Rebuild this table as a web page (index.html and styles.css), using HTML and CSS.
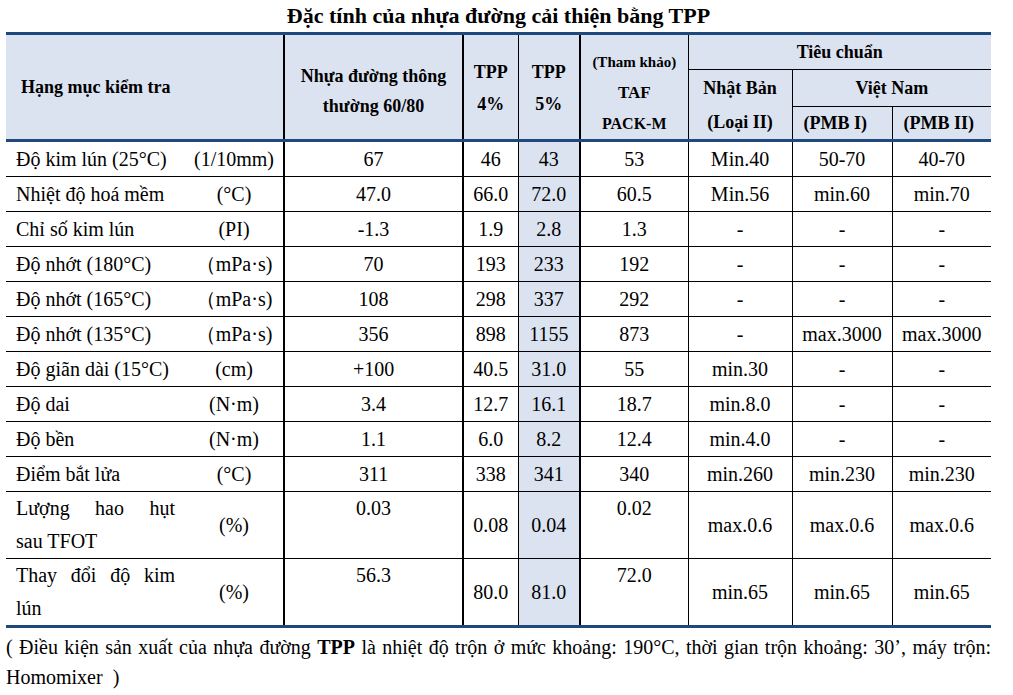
FILE: index.html
```html
<!DOCTYPE html>
<html lang="vi">
<head>
<meta charset="utf-8">
<title>Đặc tính của nhựa đường cải thiện bằng TPP</title>
<link rel="stylesheet" href="styles.css">
</head>
<body>
<div class="sheet">
  <h1 class="title">Đặc tính của nhựa đường cải thiện bằng TPP</h1>
  <table class="spec">
    <colgroup>
      <col class="c-item"><col class="c-unit"><col class="c-base"><col class="c-tpp4"><col class="c-tpp5"><col class="c-taf"><col class="c-jp"><col class="c-vn1"><col class="c-vn2">
    </colgroup>
    <thead>
      <tr class="hr1">
        <th colspan="2" rowspan="3" class="h-item bR2">Hạng mục kiểm tra</th>
        <th rowspan="3" class="bR2 h-base">Nhựa đường thông<br>thường 60/80</th>
        <th rowspan="3" class="bR1 h-tpp">TPP<br>4%</th>
        <th rowspan="3" class="bR2 h-tpp">TPP<br>5%</th>
        <th rowspan="3" class="bR1 h-taf"><span class="t-small">(Tham khảo)</span><span class="t-taf">TAF</span><span class="t-pack">PACK-M</span></th>
        <th colspan="3" class="bB">Tiêu chuẩn</th>
      </tr>
      <tr class="hr2">
        <th rowspan="2" class="bR1 h-jp"><span class="jp1">Nhật Bản</span><span class="jp2">(Loại II)</span></th>
        <th colspan="2" class="bB">Việt Nam</th>
      </tr>
      <tr class="hr3">
        <th class="bR1 h-left">(PMB I)</th>
        <th class="h-left">(PMB II)</th>
      </tr>
    </thead>
    <tbody>
      <tr>
        <td class="item">Độ kim lún (25°C)</td><td class="unit">(1/10mm)</td>
        <td class="bR2">67</td><td class="bR1">46</td><td class="hl bR2">43</td><td class="bR1">53</td><td class="bR1">Min.40</td><td class="bR1">50-70</td><td>40-70</td>
      </tr>
      <tr>
        <td class="item">Nhiệt độ hoá mềm</td><td class="unit">(°C)</td>
        <td class="bR2">47.0</td><td class="bR1">66.0</td><td class="hl bR2">72.0</td><td class="bR1">60.5</td><td class="bR1">Min.56</td><td class="bR1">min.60</td><td>min.70</td>
      </tr>
      <tr>
        <td class="item">Chỉ số kim lún</td><td class="unit">(PI)</td>
        <td class="bR2">-1.3</td><td class="bR1">1.9</td><td class="hl bR2">2.8</td><td class="bR1">1.3</td><td class="bR1">-</td><td class="bR1">-</td><td>-</td>
      </tr>
      <tr>
        <td class="item">Độ nhớt (180°C)</td><td class="unit">（mPa·s)</td>
        <td class="bR2">70</td><td class="bR1">193</td><td class="hl bR2">233</td><td class="bR1">192</td><td class="bR1">-</td><td class="bR1">-</td><td>-</td>
      </tr>
      <tr>
        <td class="item">Độ nhớt (165°C)</td><td class="unit">（mPa·s)</td>
        <td class="bR2">108</td><td class="bR1">298</td><td class="hl bR2">337</td><td class="bR1">292</td><td class="bR1">-</td><td class="bR1">-</td><td>-</td>
      </tr>
      <tr>
        <td class="item">Độ nhớt (135°C)</td><td class="unit">（mPa·s)</td>
        <td class="bR2">356</td><td class="bR1">898</td><td class="hl bR2">1155</td><td class="bR1">873</td><td class="bR1">-</td><td class="bR1">max.3000</td><td>max.3000</td>
      </tr>
      <tr>
        <td class="item">Độ giãn dài (15°C)</td><td class="unit">(cm)</td>
        <td class="bR2">+100</td><td class="bR1">40.5</td><td class="hl bR2">31.0</td><td class="bR1">55</td><td class="bR1">min.30</td><td class="bR1">-</td><td>-</td>
      </tr>
      <tr>
        <td class="item">Độ dai</td><td class="unit">(N·m)</td>
        <td class="bR2">3.4</td><td class="bR1">12.7</td><td class="hl bR2">16.1</td><td class="bR1">18.7</td><td class="bR1">min.8.0</td><td class="bR1">-</td><td>-</td>
      </tr>
      <tr>
        <td class="item">Độ bền</td><td class="unit">(N·m)</td>
        <td class="bR2">1.1</td><td class="bR1">6.0</td><td class="hl bR2">8.2</td><td class="bR1">12.4</td><td class="bR1">min.4.0</td><td class="bR1">-</td><td>-</td>
      </tr>
      <tr>
        <td class="item">Điểm bắt lửa</td><td class="unit">(°C)</td>
        <td class="bR2">311</td><td class="bR1">338</td><td class="hl bR2">341</td><td class="bR1">340</td><td class="bR1">min.260</td><td class="bR1">min.230</td><td>min.230</td>
      </tr>
      <tr class="dbl">
        <td class="item"><span class="jl">Lượng hao hụt</span><span class="ln">sau TFOT</span></td><td class="unit">(%)</td>
        <td class="bR2 top">0.03</td><td class="bR1">0.08</td><td class="hl bR2">0.04</td><td class="bR1 top">0.02</td><td class="bR1">max.0.6</td><td class="bR1">max.0.6</td><td>max.0.6</td>
      </tr>
      <tr class="dbl last">
        <td class="item"><span class="jl">Thay đổi độ kim</span><span class="ln">lún</span></td><td class="unit">(%)</td>
        <td class="bR2 top">56.3</td><td class="bR1">80.0</td><td class="hl bR2">81.0</td><td class="bR1 top">72.0</td><td class="bR1">min.65</td><td class="bR1">min.65</td><td>min.65</td>
      </tr>
    </tbody>
  </table>
  <p class="note">( Điều kiện sản xuất của nhựa đường <b>TPP</b> là nhiệt độ trộn ở mức khoảng: 190°C, thời gian trộn khoảng: 30’, máy trộn: Homomixer &nbsp;)</p>
</div>
</body>
</html>
```

FILE: styles.css
```css
html, body {
  margin: 0;
  padding: 0;
  background: #ffffff;
}

body {
  font-family: "Liberation Serif", "Times New Roman", serif;
  color: #000000;
}

.sheet {
  width: 985px;
  margin-left: 6px;
}

.title {
  margin: 0;
  font-size: 22px;
  line-height: 32px;
  font-weight: bold;
  text-align: center;
}

.spec {
  width: 985px;
  table-layout: fixed;
  border-collapse: collapse;
  border-top: 3px solid #1f497d;
  border-bottom: 3px solid #1f497d;
}

.c-item { width: 179px; }
.c-unit { width: 99px; }
.c-base { width: 179px; }
.c-tpp4 { width: 55px; }
.c-tpp5 { width: 62px; }
.c-taf  { width: 108px; }
.c-jp   { width: 104px; }
.c-vn1  { width: 100px; }
.c-vn2  { width: 99px; }

.spec th {
  background: #dce3f0;
  font-size: 18px;
  font-weight: bold;
  line-height: 24px;
  padding: 0;
  text-align: center;
  vertical-align: middle;
}

.hr1 { height: 36px; }
.hr2 { height: 35px; }
.hr3 { height: 33px; }

.spec .h-item {
  text-align: left;
  padding-left: 15px;
}

.spec .h-left {
  text-align: left;
  padding-left: 11px;
}

.spec .h-base {
  line-height: 30px;
  padding-top: 8px;
}

.spec .h-tpp {
  line-height: 32px;
  padding-top: 2px;
}

.spec .h-taf {
  vertical-align: top;
  padding-top: 12px;
}

.h-taf span,
.h-jp span {
  display: block;
}

.t-small { font-size: 15px; line-height: 30px; }
.t-taf { font-size: 17px; line-height: 31px; }
.t-pack { font-size: 16px; line-height: 31px; }

.jp1 { line-height: 36px; }
.jp2 { line-height: 33px; }

.bR2 { border-right: 2px solid #000; }
.bR1 { border-right: 1px solid #000; }
.bB { border-bottom: 1px solid #000; }

.spec td {
  font-size: 20px;
  line-height: 34px;
  padding: 0;
  text-align: center;
  vertical-align: middle;
  border-bottom: 1px solid #000;
}

.spec tbody tr { height: 35px; }
.spec tbody tr.dbl { height: 66px; }

.spec tbody tr:first-child td {
  border-top: 3px solid #1f497d;
}

.spec .item {
  text-align: left;
  padding: 0 10px 0 10px;
}

.spec .unit {
  border-right: 2px solid #000;
}

.spec .hl {
  background: #dce3f0;
}

.spec .dbl td {
  line-height: 33px;
}

.spec .dbl .top {
  vertical-align: top;
}

.spec .item .jl {
  display: block;
  text-align: justify;
  text-align-last: justify;
}

.spec .item .ln {
  display: block;
}

.note {
  margin: 4px 0 0 0;
  font-size: 20px;
  line-height: 30px;
  text-align: justify;
}
```
